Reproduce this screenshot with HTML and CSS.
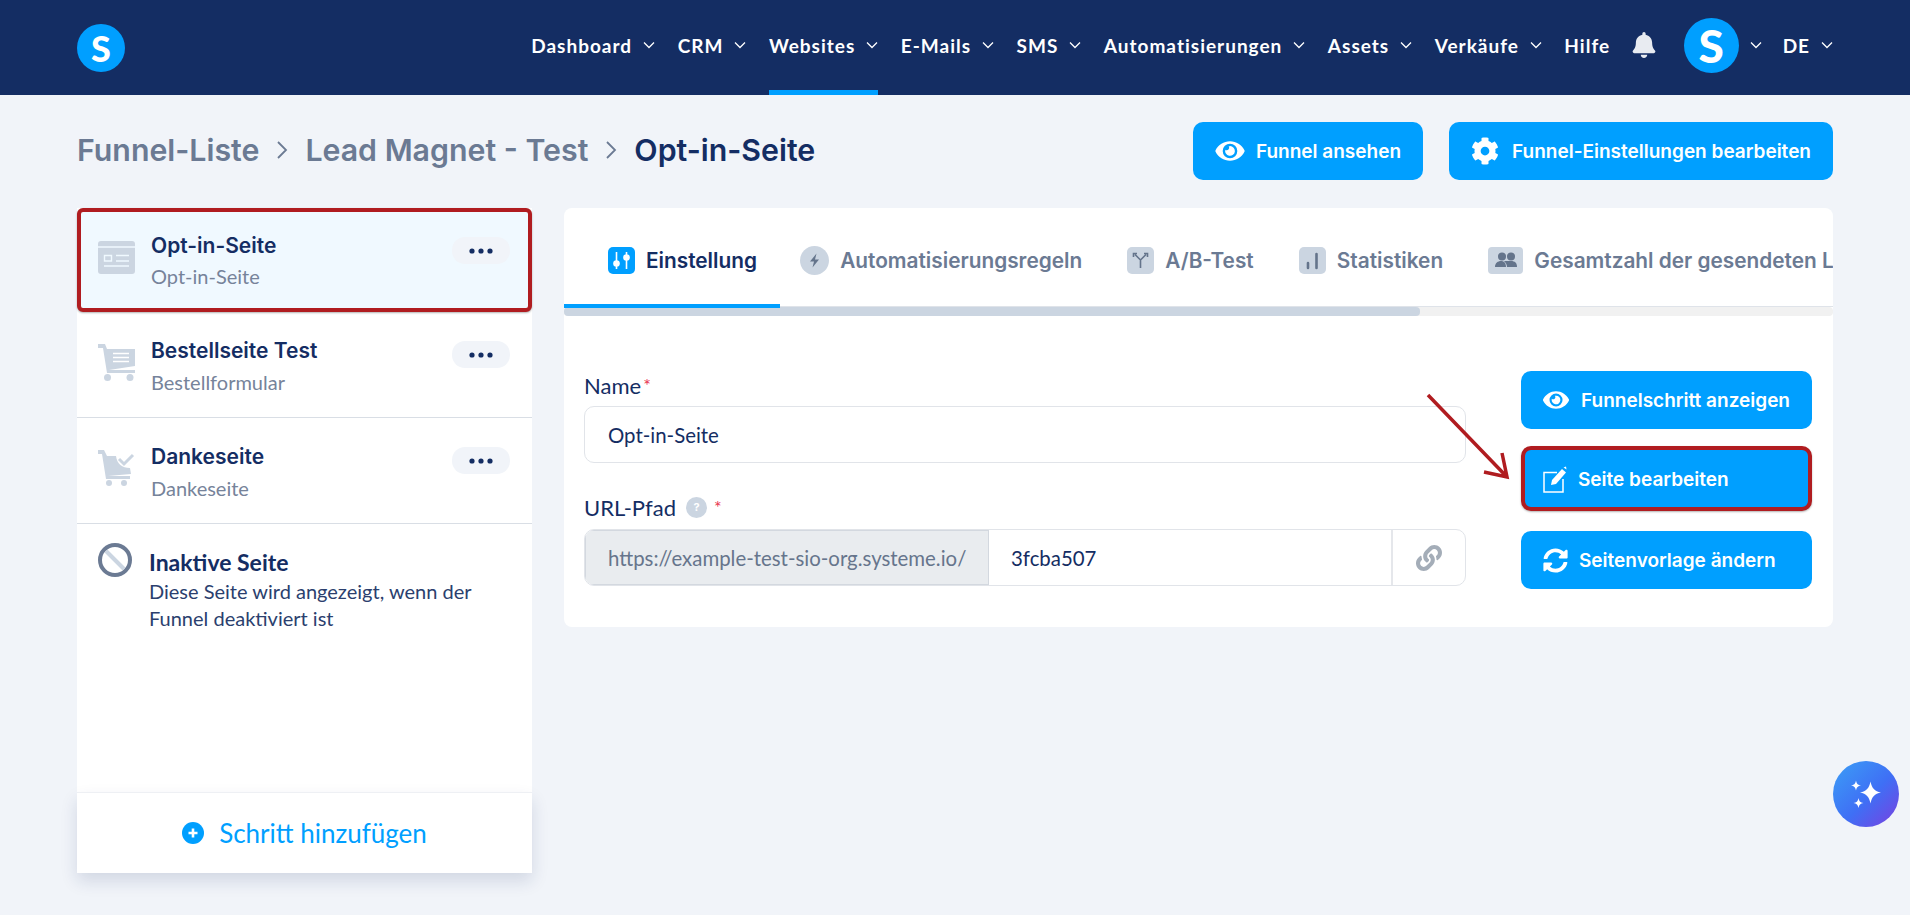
FILE: index.html
```html
<!DOCTYPE html>
<html lang="de">
<head>
<meta charset="utf-8">
<title>Opt-in-Seite</title>
<link rel="stylesheet" href="styles.css">
</head>
<body>
<svg class="sprites" width="0" height="0" aria-hidden="true">
  <symbol id="chev" viewBox="0 0 12 8"><path d="M1 1.5 6 6.5 11 1.5" fill="none" stroke="currentColor" stroke-width="1.3"/></symbol>
  <symbol id="eye" viewBox="0 0 576 512"><path fill="currentColor" d="M572.52 241.4C518.29 135.59 410.93 64 288 64S57.68 135.64 3.48 241.41a32.35 32.35 0 0 0 0 29.19C57.71 376.41 165.07 448 288 448s230.32-71.64 284.52-177.41a32.35 32.35 0 0 0 0-29.19zM288 400a144 144 0 1 1 144-144 143.93 143.93 0 0 1-144 144zm0-240a95.31 95.31 0 0 0-25.31 3.79 47.85 47.85 0 0 1-66.9 66.9A95.78 95.78 0 1 0 288 160z"/></symbol>
  <symbol id="dots" viewBox="0 0 24 6"><circle cx="3" cy="3" r="2.6" fill="currentColor"/><circle cx="12" cy="3" r="2.6" fill="currentColor"/><circle cx="21" cy="3" r="2.6" fill="currentColor"/></symbol>
</svg>

<header class="topbar">
  <a class="logo"><span>S</span></a>
  <nav class="nav">
    <a class="nav-item">Dashboard<svg class="chev"><use href="#chev"/></svg></a>
    <a class="nav-item">CRM<svg class="chev"><use href="#chev"/></svg></a>
    <a class="nav-item nav-active">Websites<svg class="chev"><use href="#chev"/></svg></a>
    <a class="nav-item">E-Mails<svg class="chev"><use href="#chev"/></svg></a>
    <a class="nav-item">SMS<svg class="chev"><use href="#chev"/></svg></a>
    <a class="nav-item">Automatisierungen<svg class="chev"><use href="#chev"/></svg></a>
    <a class="nav-item">Assets<svg class="chev"><use href="#chev"/></svg></a>
    <a class="nav-item">Verkäufe<svg class="chev"><use href="#chev"/></svg></a>
    <a class="nav-item">Hilfe</a>
    <svg class="bell" viewBox="0 0 448 512"><path fill="#e8ebf1" d="M224 512c35.32 0 63.97-28.65 63.97-64H160.03c0 35.35 28.65 64 63.97 64zm215.39-149.71c-19.32-20.76-55.47-51.99-55.47-154.29 0-77.7-54.48-139.9-127.94-155.16V32c0-17.67-14.32-32-31.98-32s-31.98 14.33-31.98 32v20.84C118.56 68.1 64.08 130.3 64.08 208c0 102.3-36.15 133.53-55.47 154.29-6 6.45-8.66 14.16-8.61 21.71.11 16.4 12.98 32 32.1 32h383.8c19.12 0 32-15.6 32.1-32 .05-7.55-2.61-15.27-8.61-21.71z"/></svg>
    <a class="avatar"><span>S</span></a>
    <svg class="chev chev-avatar"><use href="#chev"/></svg>
    <a class="nav-item nav-lang">DE<svg class="chev"><use href="#chev"/></svg></a>
  </nav>
</header>

<main class="page">
  <div class="titlebar">
    <div class="crumbs">
      <a class="crumb">Funnel-Liste</a>
      <svg class="crumb-sep" viewBox="0 0 12 20"><path d="M2 2 10 10 2 18" fill="none" stroke="currentColor" stroke-width="1.8"/></svg>
      <a class="crumb">Lead Magnet - Test</a>
      <svg class="crumb-sep" viewBox="0 0 12 20"><path d="M2 2 10 10 2 18" fill="none" stroke="currentColor" stroke-width="1.8"/></svg>
      <span class="crumb crumb-current">Opt-in-Seite</span>
    </div>
    <div class="title-actions">
      <a class="btn btn-top"><svg class="ico-eye"><use href="#eye"/></svg>Funnel ansehen</a>
      <a class="btn btn-top"><svg class="ico-gear" viewBox="0 0 512 512"><path fill="currentColor" d="M487.4 315.7l-42.6-24.6c4.3-23.2 4.3-47 0-70.2l42.6-24.6c4.9-2.8 7.1-8.6 5.5-14-11.1-35.6-30-67.8-54.7-94.6-3.8-4.1-10-5.1-14.8-2.3L380.8 110c-17.9-15.4-38.5-27.3-60.8-35.1V25.8c0-5.6-3.9-10.5-9.4-11.7-36.7-8.2-74.3-7.8-109.2 0-5.5 1.2-9.4 6.1-9.4 11.7V75c-22.2 7.9-42.8 19.8-60.8 35.1L88.7 85.5c-4.9-2.8-11-1.9-14.8 2.3-24.7 26.7-43.6 58.9-54.7 94.6-1.7 5.4.6 11.2 5.5 14L67.3 221c-4.3 23.2-4.3 47 0 70.2l-42.6 24.6c-4.9 2.8-7.1 8.6-5.5 14 11.1 35.6 30 67.8 54.7 94.6 3.8 4.1 10 5.1 14.8 2.3l42.6-24.6c17.9 15.4 38.5 27.3 60.8 35.1v49.2c0 5.6 3.9 10.5 9.4 11.7 36.7 8.2 74.3 7.8 109.2 0 5.5-1.2 9.4-6.1 9.4-11.7v-49.2c22.2-7.9 42.8-19.8 60.8-35.1l42.6 24.6c4.9 2.8 11 1.9 14.8-2.3 24.7-26.7 43.6-58.9 54.7-94.6 1.5-5.5-.7-11.3-5.6-14.1zM256 336c-44.1 0-80-35.9-80-80s35.9-80 80-80 80 35.9 80 80-35.9 80-80 80z"/></svg>Funnel-Einstellungen bearbeiten</a>
    </div>
  </div>

  <div class="columns">
    <aside class="sidebar">
      <div class="step step-selected">
        <svg class="step-ico" viewBox="0 0 37 33"><path fill="#cbd5e1" d="M3 0h31a3 3 0 0 1 3 3v27a3 3 0 0 1-3 3H3a3 3 0 0 1-3-3V3a3 3 0 0 1 3-3z"/><path fill="none" stroke="#f0f9ff" stroke-width="1.4" d="M0 6h37"/><path fill="none" stroke="#f0f9ff" stroke-width="1.4" d="M6.5 14.5h7v5.500h-7zM18 14.500h13M18 20h13M6 25h25"/></svg>
        <div class="step-text"><div class="step-title">Opt-in-Seite</div><div class="step-sub">Opt-in-Seite</div></div>
        <button class="step-more"><svg class="ico-dots"><use href="#dots"/></svg></button>
      </div>
      <div class="step">
        <svg class="step-ico" viewBox="0 0 37 37"><path fill="#cbd5e1" d="M0 0h7l2 5h28v17L11 26h26v3H9L5 4H0z"/><path fill="none" stroke="#fff" stroke-width="1.400" d="M15 9.500h16M15 13.500h16M15 17.500h16"/><circle cx="9.500" cy="33.500" r="3.500" fill="#cbd5e1"/><circle cx="32" cy="33.500" r="3.500" fill="#cbd5e1"/></svg>
        <div class="step-text"><div class="step-title">Bestellseite Test</div><div class="step-sub">Bestellformular</div></div>
        <button class="step-more"><svg class="ico-dots"><use href="#dots"/></svg></button>
      </div>
      <div class="step">
        <svg class="step-ico" viewBox="0 0 37 37"><path fill="#cbd5e1" d="M0 0h6l3 6h9c1 8 6 12 14 12l1 6L10 26h22v3H8L4 4H0z"/><path fill="none" stroke="#cbd5e1" stroke-width="3" d="M21 9l5 5 9-9"/><circle cx="11" cy="33" r="3" fill="#cbd5e1"/><circle cx="26" cy="33" r="3" fill="#cbd5e1"/></svg>
        <div class="step-text"><div class="step-title">Dankeseite</div><div class="step-sub">Dankeseite</div></div>
        <button class="step-more"><svg class="ico-dots"><use href="#dots"/></svg></button>
      </div>
      <div class="inactive">
        <svg class="inactive-ico" viewBox="0 0 34 34"><path d="M8 8l18 18" stroke="#cbd5e1" stroke-width="4"/><circle cx="17" cy="17" r="15" fill="none" stroke="#6b7a93" stroke-width="4"/></svg>
        <div class="inactive-text">
          <div class="inactive-title">Inaktive Seite</div>
          <div class="inactive-desc">Diese Seite wird angezeigt, wenn der Funnel deaktiviert ist</div>
        </div>
      </div>
      <a class="add-step">
        <svg class="add-ico" viewBox="0 0 22 22"><circle cx="11" cy="11" r="11" fill="#009fff"/><path d="M11 6.500v9M6.500 11h9" stroke="#fff" stroke-width="2.600"/></svg>
        Schritt hinzufügen
      </a>
    </aside>

    <section class="card">
      <div class="tabs">
        <a class="tab tab-active">
          <svg class="tab-ico" viewBox="0 0 27 27"><rect width="27" height="27" rx="5" fill="#009fff"/><path d="M8.500 5v17M18.500 5v17" stroke="#fff" stroke-width="1.600"/><circle cx="8.500" cy="16.500" r="3.300" fill="#fff"/><circle cx="18.500" cy="10.500" r="3.300" fill="#fff"/></svg>
          Einstellung
        </a>
        <a class="tab">
          <svg class="tab-ico tab-ico-round" viewBox="0 0 29 29"><circle cx="14.500" cy="14.500" r="14.500" fill="#cbd5e1"/><path d="M16.500 7.500 10 15.500h4l-1.500 6 6.500-8h-4z" fill="#64748b"/></svg>
          Automatisierungsregeln
        </a>
        <a class="tab">
          <svg class="tab-ico" viewBox="0 0 27 27"><rect width="27" height="27" rx="5" fill="#cbd5e1"/><path d="M13.500 21v-8L8 7.500M13.500 13 19 7.500M6.500 10V6.500H10M20.500 10V6.500H17" fill="none" stroke="#64748b" stroke-width="1.600"/></svg>
          A/B-Test
        </a>
        <a class="tab">
          <svg class="tab-ico" viewBox="0 0 27 27"><rect width="27" height="27" rx="5" fill="#cbd5e1"/><path d="M9 16v5M17.500 7v14" stroke="#64748b" stroke-width="2.600" stroke-linecap="round"/></svg>
          Statistiken
        </a>
        <a class="tab">
          <svg class="tab-ico tab-ico-wide" viewBox="0 0 35 27"><rect width="35" height="27" rx="4" fill="#cbd5e1"/><circle cx="14" cy="9.500" r="4" fill="#64748b"/><circle cx="23" cy="9.500" r="4" fill="#64748b"/><path d="M7 20c0-4 3-6 6-6s5 2 5 6zM16 14h7c4 0 6 2 6 6H19c0-2-1-4-3-6z" fill="#64748b"/></svg>
          Gesamtzahl der gesendeten Leads
        </a>
      </div>
      <div class="scrollbar"><div class="scroll-thumb"></div></div>
      <div class="card-body">
        <form class="fields">
          <label class="field-label">Name<span class="req">*</span></label>
          <div class="input">Opt-in-Seite</div>
          <label class="field-label field-label-second">URL-Pfad<span class="help">?</span><span class="req req-url">*</span></label>
          <div class="input-group">
            <div class="prefix">https://example-test-sio-org.systeme.io/</div>
            <div class="slug">3fcba507</div>
            <div class="copy"><svg class="ico-link" viewBox="0 0 512 512"><path fill="currentColor" d="M326.612 185.391c59.747 59.809 58.927 155.698.36 214.59-.11.12-.24.25-.36.37l-67.2 67.2c-59.27 59.27-155.699 59.262-214.96 0-59.27-59.26-59.27-155.7 0-214.96l37.106-37.106c9.84-9.84 26.786-3.3 27.294 10.606.648 17.722 3.826 35.527 9.69 52.721 1.986 5.822.567 12.262-3.783 16.612l-13.087 13.087c-28.026 28.026-28.905 73.66-1.155 101.96 28.024 28.579 74.086 28.749 102.325.51l67.2-67.19c28.191-28.191 28.073-73.757 0-101.83-3.701-3.694-7.429-6.564-10.341-8.569a16.037 16.037 0 0 1-6.947-12.606c-.396-10.567 3.348-21.456 11.698-29.806l21.054-21.055c5.521-5.521 14.182-6.199 20.584-1.731a152.482 152.482 0 0 1 20.522 17.197zM467.547 44.449c-59.261-59.262-155.69-59.27-214.96 0l-67.2 67.2c-.12.12-.25.25-.36.37-58.566 58.892-59.387 154.781.36 214.59a152.454 152.454 0 0 0 20.521 17.196c6.402 4.468 15.064 3.789 20.584-1.731l21.054-21.055c8.35-8.35 12.094-19.239 11.698-29.806a16.037 16.037 0 0 0-6.947-12.606c-2.912-2.005-6.64-4.875-10.341-8.569-28.073-28.073-28.191-73.639 0-101.83l67.2-67.19c28.239-28.239 74.3-28.069 102.325.51 27.75 28.3 26.872 73.934-1.155 101.96l-13.087 13.087c-4.35 4.35-5.769 10.79-3.783 16.612 5.864 17.194 9.042 34.999 9.69 52.721.509 13.906 17.454 20.446 27.294 10.606l37.106-37.106c59.271-59.259 59.271-155.699.001-214.959z"/></svg></div>
          </div>
        </form>
        <div class="actions">
          <a class="btn btn-side"><svg class="ico-eye ico-eye-side"><use href="#eye"/></svg>Funnelschritt anzeigen</a>
          <a class="btn btn-side btn-marked"><svg class="ico-edit" viewBox="0 0 24 27"><path d="M14 6.500H1v19.500h19V13" fill="none" stroke="currentColor" stroke-width="1.500"/><path d="M8 19l1-5L19 3l4 3.500L13 18z" fill="currentColor"/><path d="M20.500 1.500l2.500-1 .5 3z" fill="currentColor"/></svg>Seite bearbeiten</a>
          <a class="btn btn-side btn-last"><svg class="ico-sync" viewBox="0 0 512 512"><path fill="currentColor" d="M370.72 133.28C339.458 104.008 298.888 87.962 255.848 88c-77.458.068-144.328 53.178-162.791 126.85-1.344 5.363-6.122 9.15-11.651 9.15H24.103c-7.498 0-13.194-6.807-11.807-14.176C33.933 94.924 134.813 8 256 8c66.448 0 126.791 26.136 171.315 68.685L463.03 40.97C478.149 25.851 504 36.559 504 57.941V192c0 13.255-10.745 24-24 24H345.941c-21.382 0-32.09-25.851-16.971-40.971l41.75-41.749zM32 296h134.059c21.382 0 32.09 25.851 16.971 40.971l-41.75 41.75c31.262 29.273 71.835 45.319 114.876 45.28 77.418-.07 144.315-53.144 162.787-126.849 1.344-5.363 6.122-9.15 11.651-9.15h57.304c7.498 0 13.194 6.807 11.807 14.176C478.067 417.076 377.187 504 256 504c-66.448 0-126.791-26.136-171.315-68.685L48.97 471.03C33.851 486.149 8 475.441 8 454.059V320c0-13.255 10.745-24 24-24z"/></svg>Seitenvorlage ändern</a>
        </div>
      </div>
    </section>
  </div>
</main>

<svg class="arrow" viewBox="0 0 90 90"><path d="M3 3 82 85M77 61 82 85 59 80" fill="none" stroke="#b01c20" stroke-width="3.500"/></svg>

<a class="assistant">
  <svg viewBox="0 0 66 66" width="66" height="66"><path fill="#fff" d="M37.500 20.500c1.500 7 4 9.500 10.500 11-6.500 1.500-9 4-10.500 11-1.500-7-4-9.500-10.500-11 6.500-1.500 9-4 10.500-11zM23 19.500c.8 3.500 1.800 4.500 5 5-3.200.5-4.200 1.500-5 5-.8-3.500-1.800-4.500-5-5 3.200-.5 4.200-1.500 5-5zM25.500 37c.8 3.500 1.800 4.500 5 5-3.200.5-4.200 1.500-5 5-.8-3.500-1.800-4.500-5-5 3.200-.5 4.200-1.500 5-5z"/></svg>
</a>
</body>
</html>
```
FILE: styles.css
```css
* { box-sizing: border-box; }
html, body { margin: 0; height: 915px; overflow: hidden; }
body { background: #f1f4f9; color: #142d63; font-family: "Inter", "Liberation Sans", sans-serif; position: relative; }
a { color: inherit; text-decoration: none; }
.sprites { position: absolute; }

/* top bar */
.topbar { height: 95px; background: #142d63; display: flex; align-items: center; justify-content: space-between; padding: 0 77px; }
.logo { width: 48px; height: 48px; border-radius: 50%; background: #009fff; color: #fff; display: flex; align-items: center; justify-content: center; font: 900 36px "Lato", sans-serif; }
.nav { display: flex; align-items: center; height: 95px; padding-bottom: 5px; color: #fff; }
.nav-item { display: flex; align-items: center; height: 95px; margin-bottom: -5px; font: 700 19px "Lato", sans-serif; letter-spacing: 1px; margin-right: 22.5px; border-bottom: 5px solid transparent; white-space: nowrap; }
.nav-active { border-bottom-color: #009fff; }
.chev { width: 12px; height: 8px; margin-left: 11px; color: #fff; }
.bell { width: 24px; height: 26px; margin-left: -1px; margin-right: 28px; }
.avatar { width: 55px; height: 55px; border-radius: 50%; background: #009fff; color: #fff; display: flex; align-items: center; justify-content: center; font: 900 46px "Lato", sans-serif; }
.chev-avatar { margin-left: 11px; margin-right: 21px; }
.nav-lang { margin-right: 0; }

/* page */
.page { padding: 27px 77px 0; }
.titlebar { display: flex; justify-content: space-between; align-items: center; margin-bottom: 28px; height: 58px; }
.crumbs { display: flex; align-items: center; padding-bottom: 2px; }
.crumb { font-size: 30.3px; font-weight: 600; color: #6b7a93; }
.crumb-current { color: #142d63; }
.crumb-sep { width: 14px; height: 20px; margin: 0 16px; color: #6b7a93; }
.title-actions { display: flex; gap: 26px; }
.btn { display: flex; align-items: center; background: #009fff; color: #fff; border-radius: 10px; font-weight: 600; white-space: nowrap; }
.btn-top { height: 58px; padding: 0 22px; font: 600 19px "Inter", sans-serif; }
.ico-eye { width: 30px; height: 26px; margin-right: 11px; color: #fff; }
.ico-gear { width: 28px; height: 28px; margin-right: 13px; }

.columns { display: flex; gap: 32px; align-items: flex-start; }

/* sidebar */
.sidebar { width: 455px; height: 665px; background: #fff; display: flex; flex-direction: column; }
.step { height: 106px; padding: 25px 22px 0 21px; display: flex; align-items: flex-start; border-bottom: 1px solid #d9dee5; position: relative; }
.step-selected { height: 104px; background: #f0f9ff; border: 4px solid #b01c20; border-radius: 6px; padding: 20px 18px 0 17px; box-shadow: 0 1px 2px rgba(0,0,0,.3); }
.step-ico { width: 37px; height: 37px; margin: 7px 16px 0 0; flex: none; }
.step-selected .step-ico { height: 33px; margin-top: 9px; }
.step-text { flex: 1; }
.step-title { font-size: 21px; font-weight: 600; line-height: 28px; color: #142d63; }
.step-sub { font: 400 20px/28px "Lato", sans-serif; color: #76839a; margin-top: 3px; }
.step-selected .step-sub { margin-top: 2px; }
.step-more { width: 58px; height: 27px; border: 0; background: #f1f4f9; border-radius: 13px; padding: 0; display: flex; align-items: center; justify-content: center; color: #142d63; margin-top: 4px; }
.step-selected .step-more { margin-top: 5px; }
.ico-dots { width: 24px; height: 6px; }
.inactive { display: flex; padding: 19px 30px 0 21px; flex: 1; }
.inactive-ico { width: 34px; height: 34px; flex: none; margin-right: 17px; }
.inactive-text { margin-top: 5px; }
.inactive-title { font: 700 23px/28px "Lato", sans-serif; color: #142d63; }
.inactive-desc { font: 400 20px/27px "Lato", sans-serif; color: #2b3f6e; margin-top: 2px; }
.add-step { height: 81px; flex: none; display: flex; align-items: center; justify-content: center; gap: 15px; font: 400 26px "Lato", sans-serif; color: #009fff; background: #fff; border-top: 1px solid #eef0f4; box-shadow: 0 8px 16px rgba(20,45,99,.14); }
.add-ico { width: 22px; height: 22px; }

/* card */
.card { width: 1269px; height: 419px; background: #fff; border-radius: 8px; overflow: hidden; }
.tabs { height: 99px; display: flex; align-items: flex-start; box-shadow: inset 0 -1px 0 #dfe3e9; }
.tab { display: flex; align-items: center; flex: none; gap: 11px; padding: 8px 22.6px 0; font-size: 20.8px; font-weight: 600; color: #6b7a93; white-space: nowrap; height: 100px; border-bottom: 4px solid transparent; position: relative; z-index: 1; }
.tab:first-child { padding-left: 44px; }
.tab-active { color: #142d63; border-bottom-color: #009fff; }
.tab-ico { width: 27px; height: 27px; }
.tab-ico-round { width: 29px; height: 29px; margin-left: -2px; }
.tab-ico-wide { width: 35px; }
.scrollbar { height: 9px; background: #f1f1f1; border-radius: 4px; }
.scroll-thumb { width: 856px; height: 9px; background: #cbd5e1; border-radius: 4px; }
.card-body { display: flex; padding: 55px 21px 0 20px; gap: 55px; }
.fields { width: 882px; padding-top: 3px; }
.field-label { display: flex; align-items: center; height: 25px; padding-bottom: 3px; font: 400 22px "Lato", sans-serif; color: #142d63; margin-bottom: 7px; }
.field-label-second { margin-top: 33px; margin-bottom: 8px; }
.req { color: #e8324f; font-size: 18px; margin-left: 2px; align-self: flex-start; }
.req-url { margin-left: 7px; }
.help { width: 21px; height: 21px; flex: none; border-radius: 50%; background: #cbd5e1; color: #fff; font: 700 11px/21px "Inter", sans-serif; text-align: center; margin-left: 10px; }
.input { height: 57px; border: 1px solid #e1e4e9; border-radius: 10px; padding: 0 23px; display: flex; align-items: center; font: 400 20.4px "Lato", sans-serif; color: #142d63; }
.input-group { height: 57px; border: 1px solid #e1e4e9; border-radius: 10px; display: flex; overflow: hidden; font: 400 20.4px "Lato", sans-serif; }
.prefix { width: 404px; background: #e9ecef; color: #66758c; display: flex; align-items: center; padding-left: 23px; white-space: nowrap; box-shadow: inset 0 0 0 1px #d3d8df; }
.slug { flex: 1; display: flex; align-items: center; padding-left: 22px; color: #142d63; }
.copy { width: 74px; border-left: 2px solid #e5e7eb; display: flex; align-items: center; justify-content: center; color: #a4adb8; }
.ico-link { width: 26px; height: 26px; }
.actions { width: 291px; display: flex; flex-direction: column; }
.btn-side { height: 58px; padding: 0 22px; font: 600 19px "Inter", sans-serif; }
.btn-marked { height: 65px; margin: 17px 0 20px; border: 4px solid #b01c20; box-shadow: 0 1px 2px rgba(0,0,0,.3); padding: 1px 22px 0 18px; }
.ico-eye-side { width: 27px; height: 24px; margin-right: 12px; }
.ico-edit { width: 24px; height: 27px; margin-right: 11px; }
.ico-sync { width: 25px; height: 25px; margin-right: 11px; }

/* overlays */
.arrow { position: absolute; left: 1425px; top: 392px; width: 90px; height: 90px; }
.assistant { position: absolute; left: 1833px; top: 761px; width: 66px; height: 66px; border-radius: 50%; background: linear-gradient(135deg, #3b9ff6 0%, #3f6ff5 55%, #7a3fe0 100%); }
.assistant svg { display: block; }
```
